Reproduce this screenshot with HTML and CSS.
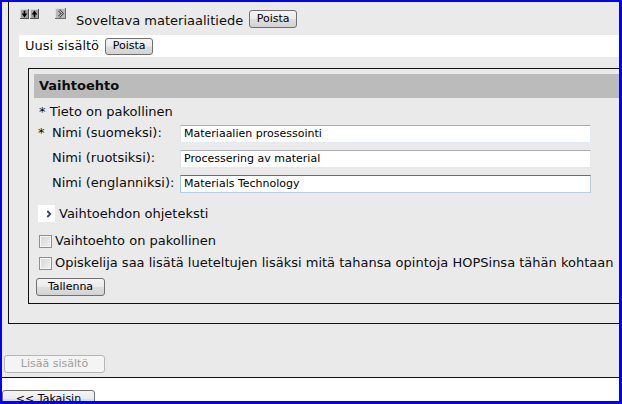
FILE: index.html
```html
<!DOCTYPE html>
<html lang="fi">
<head>
<meta charset="utf-8">
<title>Vaihtoehto</title>
<link rel="stylesheet" href="styles.css">
</head>
<body>
<div class="frame">
  <div class="outer">
    <div class="title-row">
      <span class="order-btns">
        <svg class="order-btn" width="9" height="10" viewBox="0 0 9 10">
          <rect width="9" height="10" fill="#505050"/>
          <rect width="8" height="9" fill="#dadada"/>
          <rect x="1" y="1" width="7" height="8" fill="#a2a2a2"/>
          <path d="M4.5 1.6V5.5" stroke="#000" stroke-width="1.6"/>
          <path d="M1.7 4.6H7.3L4.5 8.4Z" fill="#000"/>
        </svg>
        <svg class="order-btn" width="9" height="10" viewBox="0 0 9 10">
          <rect width="9" height="10" fill="#505050"/>
          <rect width="8" height="9" fill="#dadada"/>
          <rect x="1" y="1" width="7" height="8" fill="#a2a2a2"/>
          <path d="M4.5 8.4V4.5" stroke="#000" stroke-width="1.6"/>
          <path d="M1.7 5.4H7.3L4.5 1.6Z" fill="#000"/>
        </svg>
      </span>
      <svg class="expand-btn" width="11" height="11" viewBox="0 0 11 11">
        <rect width="11" height="11" fill="#6a6a6a"/>
        <rect width="10" height="10" fill="#e2e2e2"/>
        <rect x="1" y="1" width="9" height="9" fill="#b9b9b9"/>
        <path d="M4 2.2L7.2 5.5L4 8.8" stroke="#3c3c3c" stroke-width="2.6" fill="none"/>
        <path d="M4 2.2L7.2 5.5L4 8.8" stroke="#f4f4f4" stroke-width="1" fill="none"/>
      </svg>
      <span class="title">Soveltava materiaalitiede</span>
      <button class="btn btn-delete">Poista</button>
    </div>
    <div class="new-row">
      <span>Uusi sisältö</span>
      <button class="btn btn-delete btn-delete-sm">Poista</button>
    </div>
    <div class="option-box">
      <div class="option-head">Vaihtoehto</div>
      <div class="option-body">
        <div class="note">* Tieto on pakollinen</div>
        <div class="fields">
          <label class="field-label"><span class="req">*</span>Nimi (suomeksi):</label>
          <input class="field" type="text" value="Materiaalien prosessointi">
          <label class="field-label plain">Nimi (ruotsiksi):</label>
          <input class="field" type="text" value="Processering av material">
          <label class="field-label plain">Nimi (englanniksi):</label>
          <input class="field is-focused" id="focused" type="text" value="Materials Technology">
        </div>
        <div class="help-row">
          <span class="help-toggle">
            <svg width="17" height="17" viewBox="0 0 17 17">
              <path d="M9.3 6L12.3 9L9.3 12" stroke="#394566" stroke-width="1.8" fill="none"/>
            </svg>
          </span>
          <span class="help-text">Vaihtoehdon ohjeteksti</span>
        </div>
        <div class="checks">
          <label class="check-row"><input type="checkbox" class="check"><span>Vaihtoehto on pakollinen</span></label>
          <label class="check-row"><input type="checkbox" class="check"><span>Opiskelija saa lisätä lueteltujen lisäksi mitä tahansa opintoja HOPSinsa tähän kohtaan</span></label>
        </div>
        <button class="btn btn-save">Tallenna</button>
      </div>
    </div>
  </div>
  <div class="add-bar">
    <button class="btn btn-add" disabled>Lisää sisältö</button>
  </div>
  <div class="back-bar">
    <button class="btn btn-back">&lt;&lt; Takaisin</button>
  </div>
</div>
<script src="app.js"></script>
</body>
</html>
```

FILE: styles.css
```css
html, body {
  margin: 0;
  padding: 0;
  background: #ffffff;
}

body {
  font-family: "DejaVu Sans", Verdana, sans-serif;
  font-size: 13px;
  color: #0d0d0d;
}

.frame {
  width: 622px;
  height: 404px;
  box-sizing: border-box;
  border-style: solid;
  border-color: #0000ff;
  border-width: 2px 3px 3px 2px;
  background: #eaeaea;
  overflow: hidden;
}

.outer {
  width: 700px;
  margin-left: 6px;
  border-left: 1px solid #111;
  border-bottom: 1px solid #111;
}

.title-row {
  display: flex;
  align-items: flex-start;
  height: 33px;
  padding-left: 11px;
}

.order-btns {
  display: flex;
  gap: 1px;
  margin-top: 7px;
}

.order-btn,
.expand-btn {
  display: block;
}

.expand-btn {
  margin-left: 16px;
  margin-top: 6px;
}

.title {
  margin-left: 10px;
  margin-top: 11px;
  line-height: 16px;
  white-space: nowrap;
}

.btn {
  font-family: "DejaVu Sans", Verdana, sans-serif;
  font-size: 11px;
  color: #000;
  height: 18px;
  box-sizing: border-box;
  padding: 0;
  border: 1px solid #707070;
  border-radius: 3px;
  background: linear-gradient(#f4f4f4 0%, #ebebeb 48%, #dedede 52%, #d3d3d3 100%);
  line-height: 14px;
  white-space: nowrap;
}

.btn-delete {
  width: 48px;
  margin-left: 6px;
  margin-top: 8px;
}

.btn-delete-sm {
  height: 17px;
  margin-left: 6px;
  margin-top: 0;
}

.new-row {
  display: flex;
  align-items: center;
  height: 22px;
  margin-left: 10px;
  padding-left: 6px;
  background: #ffffff;
  line-height: 16px;
}

.option-box {
  margin: 11px 0 19px 19px;
  border: 1px solid #111;
  padding: 5px;
}

.option-head {
  height: 24px;
  line-height: 24px;
  padding-left: 5px;
  background: #bbbbbb;
  font-weight: bold;
}

.option-body {
  padding-left: 4px;
}

.note {
  margin-top: 6px;
  line-height: 16px;
  padding-left: 1px;
}

.fields {
  display: grid;
  grid-template-columns: 142px 411px;
  row-gap: 7px;
  margin-top: 5px;
}

.field-label {
  align-self: start;
  line-height: 14px;
  margin-top: 1px;
  white-space: nowrap;
}

.req {
  display: inline-block;
  width: 14px;
}

.field-label.plain {
  padding-left: 14px;
}

.field {
  height: 18px;
  box-sizing: border-box;
  margin: 0;
  padding: 0 3px 1px;
  border: 1px solid;
  border-color: #abadb3 #e3e9ef #e3e9ef #e2e3ea;
  background: #ffffff;
  font-family: "DejaVu Sans", Verdana, sans-serif;
  font-size: 11px;
  color: #000;
  outline: none;
}

.field.is-focused {
  border-color: #3d7bad #b5cfe7 #b5cfe7 #a4c9e3;
}

.help-row {
  display: flex;
  align-items: center;
  height: 17px;
  margin-top: 12px;
  line-height: 17px;
}

.help-toggle {
  display: block;
  width: 17px;
  height: 17px;
  background: #ffffff;
}

.help-toggle svg {
  display: block;
}

.help-text {
  margin-left: 4px;
}

.checks {
  display: flex;
  flex-direction: column;
  gap: 6px;
  margin-top: 11px;
}

.check-row {
  display: flex;
  align-items: flex-start;
  line-height: 16px;
  white-space: nowrap;
}

.check {
  appearance: none;
  -webkit-appearance: none;
  width: 13px;
  height: 13px;
  margin: 2px 3px 0 1px;
  box-sizing: border-box;
  border: 1px solid #8f8f8f;
  background: linear-gradient(135deg, #d6d6d6 0%, #f0f0f0 100%);
  box-shadow: inset 0 0 0 1px #f6f6f6;
  flex: none;
}

.btn-save {
  display: block;
  width: 69px;
  margin: 7px 0 2px -2px;
}

.add-bar {
  padding: 31px 0 4px 2px;
  border-bottom: 1px solid #111;
}

.btn-add {
  display: block;
  width: 101px;
  color: #9d9d9d;
  border-color: #b5b5b5;
  background: #f4f4f4;
}

.back-bar {
  height: 60px;
  background: #ffffff;
  padding-top: 12px;
  box-sizing: border-box;
}

.btn-back {
  display: block;
  width: 93px;
}
```

FILE: app.js
```js
var f = document.getElementById('focused');
if (f) {
  f.focus();
  var n = f.value.length;
  f.setSelectionRange(n, n);
}
```
